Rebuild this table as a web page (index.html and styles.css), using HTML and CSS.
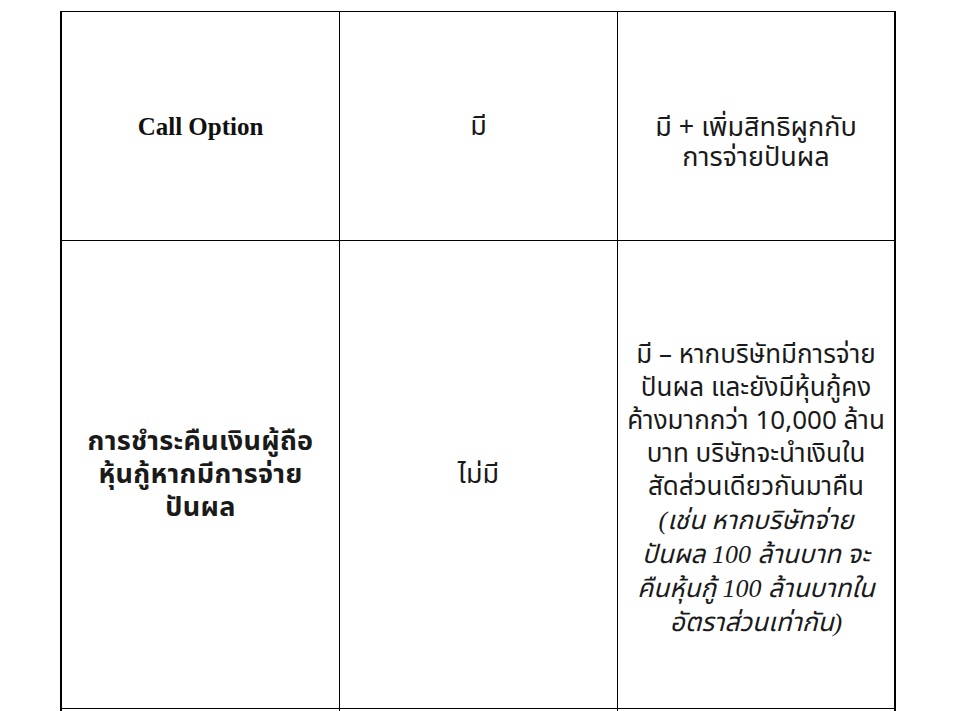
FILE: index.html
```html
<!DOCTYPE html>
<html lang="th">
<head>
<meta charset="utf-8">
<title>Call Option</title>
<link rel="stylesheet" href="styles.css">
</head>
<body>
<div class="page">
  <table class="grid">
    <colgroup>
      <col class="c1"><col class="c2"><col class="c3">
    </colgroup>
    <tr class="r1">
      <td class="head en">Call Option</td>
      <td class="mid">มี</td>
      <td class="right">มี + เพิ่มสิทธิผูกกับ<br>การจ่ายปันผล</td>
    </tr>
    <tr class="r2">
      <td class="head th">การชำระคืนเงินผู้ถือ<br>หุ้นกู้หากมีการจ่าย<br>ปันผล</td>
      <td class="mid">ไม่มี</td>
      <td class="right">มี – หากบริษัทมีการจ่าย<br>ปันผล และยังมีหุ้นกู้คง<br>ค้างมากกว่า 10,000 ล้าน<br>บาท บริษัทจะนำเงินใน<br>สัดส่วนเดียวกันมาคืน<br><em class="note">(เช่น หากบริษัทจ่าย<br>ปันผล 100 ล้านบาท จะ<br>คืนหุ้นกู้ 100 ล้านบาทใน<br>อัตราส่วนเท่ากัน)</em></td>
    </tr>
    <tr class="r3">
      <td></td><td></td><td class="last"></td>
    </tr>
  </table>
</div>
</body>
</html>
```
FILE: styles.css
```css
html, body {
  margin: 0;
  padding: 0;
  background: #ffffff;
}
body {
  color: #1a1a1a;
  font-family: "Noto Sans Thai", "Noto Sans", sans-serif;
  overflow: hidden;
}
.page {
  padding: 11px 0 0 60px;
}
.grid {
  table-layout: fixed;
  border-collapse: separate;
  border-spacing: 0;
  width: 836px;
  border-top: 1px solid #000;
  border-left: 2px solid #000;
}
.c1, .c2, .c3 { width: 278px; }
.grid td {
  box-sizing: border-box;
  border-right: 1px solid #000;
  border-bottom: 1px solid #000;
  text-align: center;
  vertical-align: middle;
  padding: 0 4px;
  font-size: 26px;
  line-height: 33px;
}
.grid td.right, .grid td.last {
  border-right: 2px solid #000;
}
.r1 td { height: 229px; }
.r2 td { height: 468px; }
.r3 td { height: 200px; }
.grid td.en {
  font-family: "Liberation Serif", serif;
  font-weight: bold;
  font-size: 25px;
  color: #111111;
}
.grid td.th {
  font-weight: bold;
  font-size: 27px;
  letter-spacing: 0.3px;
}
.grid td.mid {
  font-size: 27px;
}
.r1 td.right {
  font-size: 27px;
  line-height: 30px;
  padding-top: 34px;
}
.r2 td.right {
  padding-top: 30px;
}
.note {
  font-style: italic;
}
.note, .num {
  font-family: "Liberation Serif", "Noto Sans Thai", serif;
}
```
